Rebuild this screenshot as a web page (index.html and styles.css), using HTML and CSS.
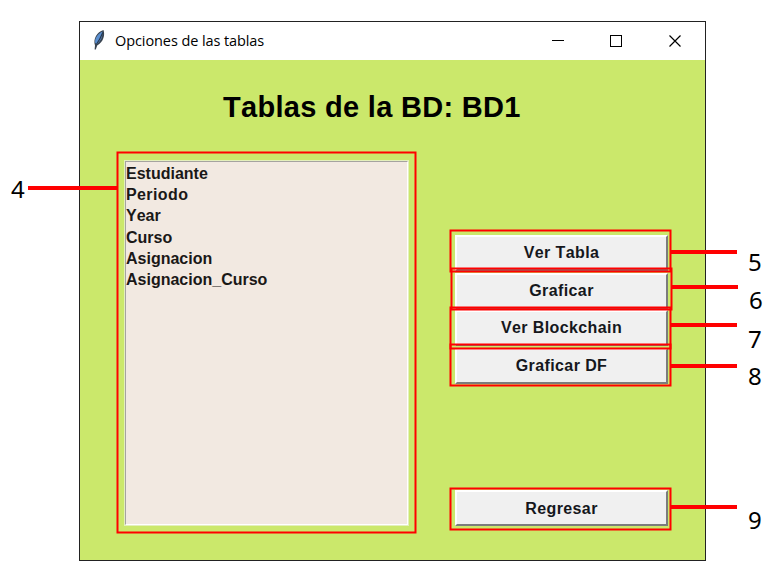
FILE: index.html
```html
<!DOCTYPE html>
<html lang="es">
<head>
<meta charset="utf-8">
<title>Opciones de las tablas</title>
<link rel="stylesheet" href="styles.css">
</head>
<body>
<main class="window">
  <header class="titlebar">
    <svg class="feather" width="14" height="22" viewBox="0 0 14 22">
      <path d="M2.6 20.5 L3 16.5 C0.8 10 5 3 11.5 1 C13.2 6 11.5 13 5.2 16.5 L3.8 20.5Z" fill="#39434f"/>
      <path d="M3.2 14 C2.5 9.5 5.5 5 10.4 2.6 C11 7 9 12 5 15Z" fill="#5b8fd0"/>
      <path d="M4.6 15 C6.5 12.5 9 8 10.8 3.5" fill="none" stroke="#26384f" stroke-width="1.2"/>
    </svg>
    <span class="title">Opciones de las tablas</span>
    <svg class="controls" width="130" height="14" viewBox="0 0 130 14" fill="none" stroke="#000" shape-rendering="crispEdges">
      <path d="M0 6.5H12"/>
      <rect x="58.5" y="1.5" width="11" height="11"/>
      <path d="M117.5 1.5L128.5 12.5M128.5 1.5L117.5 12.5" shape-rendering="auto" stroke-width="1.2"/>
    </svg>
  </header>
  <section class="content">
    <h1 class="heading">Tablas de la BD: BD1</h1>
    <div class="columns">
      <ul class="listbox">
        <li>Estudiante</li>
        <li class="wide">Periodo</li>
        <li>Year</li>
        <li>Curso</li>
        <li>Asignacion</li>
        <li>Asignacion_Curso</li>
      </ul>
      <div class="actions">
        <button class="btn">Ver Tabla</button>
        <button class="btn">Graficar</button>
        <button class="btn">Ver Blockchain</button>
        <button class="btn">Graficar DF</button>
        <button class="btn btn-back">Regresar</button>
      </div>
    </div>
  </section>
</main>
<svg class="callouts" width="779" height="579" viewBox="0 0 779 579">
  <g class="frames">
    <rect x="117.5" y="152.5" width="298" height="380"/>
    <rect x="450.5" y="230.5" width="220" height="41"/>
    <rect x="451.5" y="268.5" width="220" height="41"/>
    <rect x="450.5" y="307.5" width="220" height="41"/>
    <rect x="450.5" y="344.5" width="220" height="41"/>
    <rect x="450.5" y="488.5" width="220" height="41"/>
  </g>
  <path class="leaders" d="M28 188H118M671 252H737M672 287H738M671 325H737M671 366H737M671 507H737"/>
  <g class="numbers">
    <text x="11" y="198">4</text>
    <text x="748" y="271">5</text>
    <text x="749" y="309">6</text>
    <text x="748" y="348">7</text>
    <text x="748" y="385">8</text>
    <text x="748" y="529">9</text>
  </g>
</svg>
</body>
</html>
```
FILE: styles.css
```css
* { box-sizing: border-box; }
body {
  margin: 0;
  width: 779px;
  height: 579px;
  padding: 21px 0 0 79px;
  background: #fff;
  overflow: hidden;
  font-family: "Liberation Sans", Arial, sans-serif;
}
.window {
  width: 627px;
  height: 540px;
  border: 1px solid #222;
  background: #cbe86b;
}
.titlebar {
  display: flex;
  align-items: center;
  height: 38px;
  padding: 0 23px 0 12px;
  background: #fff;
}
.feather { margin-top: -3px; }
.title {
  margin: -2px 0 0 9px;
  font: 14.5px "Open Sans", "Noto Sans", sans-serif;
  letter-spacing: -0.09px;
}
.controls { margin-left: auto; }
.content { padding: 28px 37px 0 44px; }
.heading {
  margin: 0 0 34px;
  padding-left: 99px;
  font-size: 29px;
  line-height: 38px;
  letter-spacing: 0.3px;
  font-kerning: none;
  white-space: nowrap;
}
.columns {
  display: flex;
  justify-content: space-between;
}
.listbox {
  width: 285px;
  height: 366px;
  margin: 0;
  padding: 0.7px 0 0;
  list-style: none;
  background: #f2e9e1;
  border: 2px solid;
  border-color: #a5a3a0 #fff #fff #a5a3a0;
  outline: 1px solid #e4f0bb;
  outline-offset: -1px;
  font-weight: bold;
  font-size: 16px;
  line-height: 21.3px;
  color: #1a1817;
  font-kerning: none;
}
.wide { letter-spacing: 0.4px; }
.actions {
  display: flex;
  flex-direction: column;
  gap: 1.5px;
  width: 213px;
  padding-top: 75px;
}
.btn {
  height: 36px;
  padding: 0;
  background: #f0f0f0;
  border: 2px solid;
  border-color: #fff #7c7c7c #7c7c7c #fff;
  font: bold 16px "Liberation Sans", Arial, sans-serif;
  font-kerning: none;
  letter-spacing: 0.4px;
  color: #15171c;
}
.btn-back { margin-top: 105px; padding-top: 2px; }
.callouts {
  position: absolute;
  left: 0;
  top: 0;
  pointer-events: none;
}
.frames { fill: none; stroke: #f00; stroke-width: 2; }
.leaders { fill: none; stroke: #f00; stroke-width: 4; }
.numbers { font: 24px "Noto Sans", "Open Sans", sans-serif; }
```
